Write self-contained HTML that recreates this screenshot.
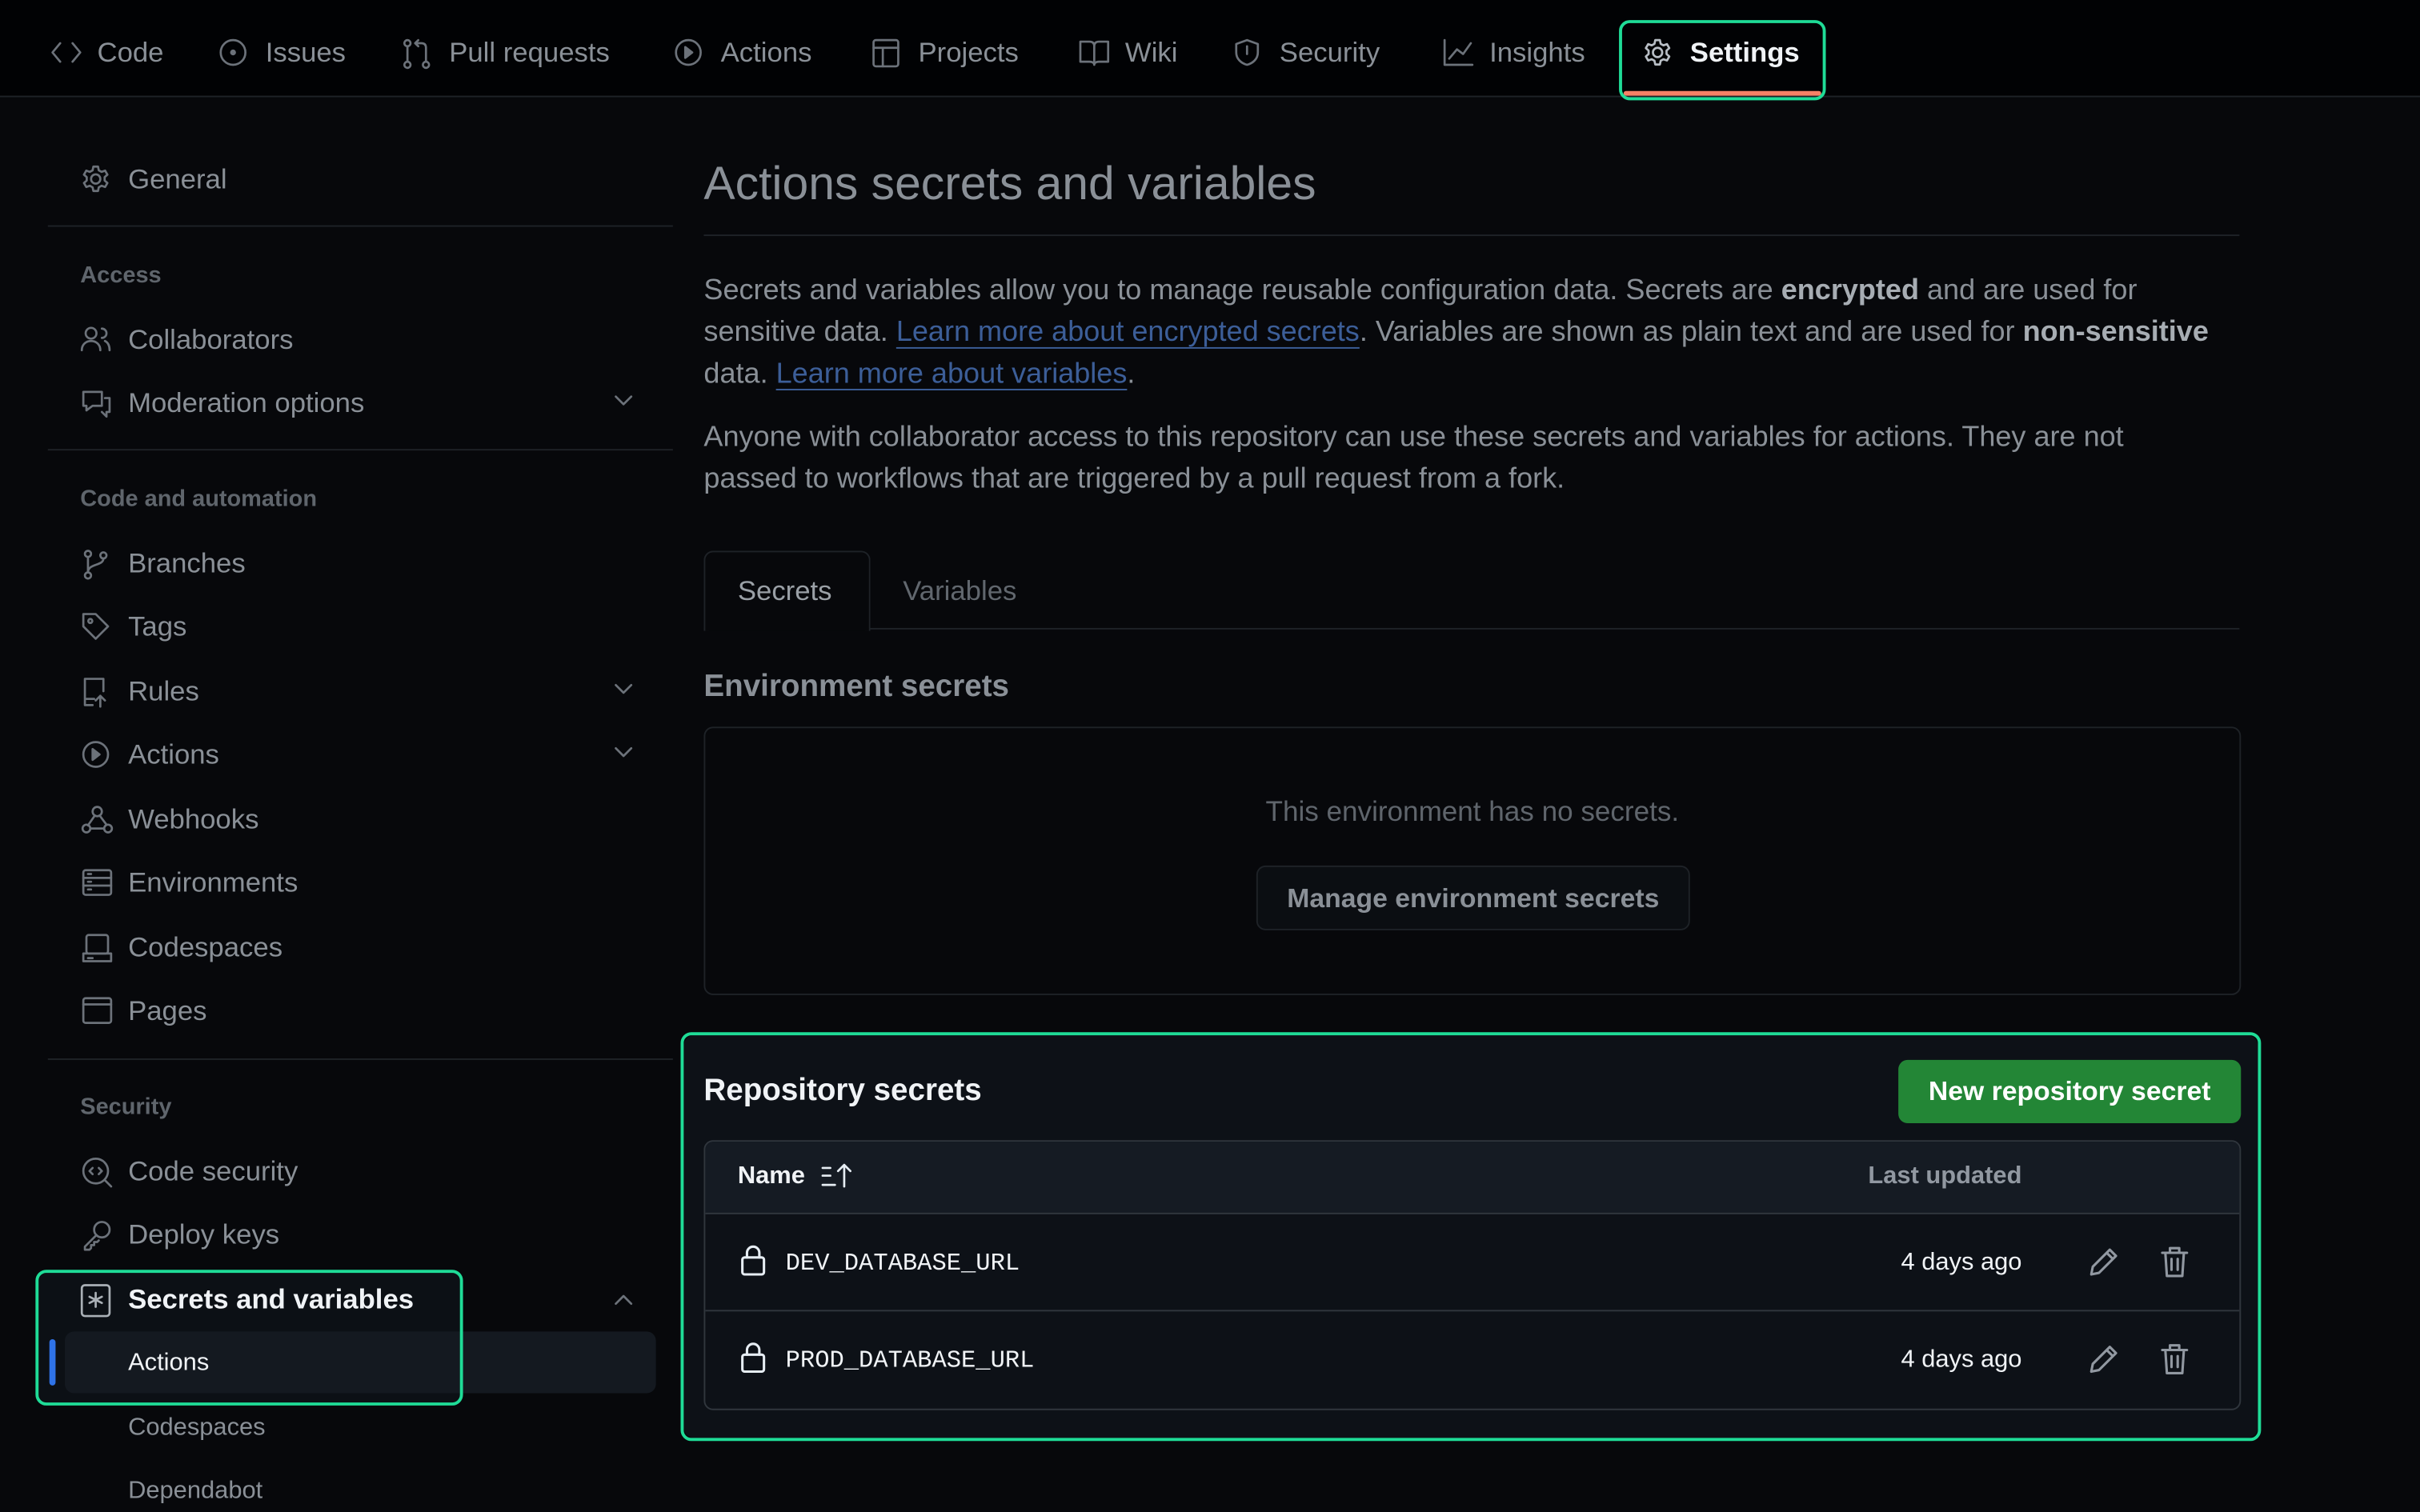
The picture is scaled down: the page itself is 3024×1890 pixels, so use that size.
<!DOCTYPE html>
<html><head><meta charset="utf-8"><style>
*{box-sizing:border-box;margin:0;padding:0}
html,body{width:3024px;height:1890px;overflow:hidden;background:#07080b}
#w{position:absolute;left:0;top:0;width:1568px;height:980px;transform:scale(1.928571);transform-origin:0 0;font-family:"Liberation Sans",sans-serif;color:#8a9097;background:#07080b}
.a{position:absolute;white-space:nowrap}
.nav{position:absolute;left:0;top:0;width:1568px;height:63px;background:#010204;border-bottom:1px solid #1e2227}
.ni{position:absolute;top:22px;font-size:18px;line-height:24px;color:#8a9097}
.ni svg{position:absolute;left:-31px;top:2px}
svg{fill:none;stroke:#6c727a;stroke-width:1.4;stroke-linecap:round;stroke-linejoin:round}
.si{position:absolute;left:83px;font-size:18px;line-height:24px;color:#8a9097}
.si svg{position:absolute;left:-31px;top:2px}
.sh{position:absolute;left:52px;font-size:15px;font-weight:bold;color:#5f656c}
.sep{position:absolute;left:31px;width:405px;height:1px;background:#1e2227}
.hl{position:absolute;border:2.5px solid #1fdc97;border-radius:7px}
.chev{position:absolute;left:397px}
p{position:absolute;left:456px;font-size:18.7px;line-height:27px;color:#8a9097;white-space:nowrap}
a{color:#3c5e98;text-decoration:underline;text-underline-offset:4px}
b{color:#a7adb3}
</style></head><body><div id="w">
<div class="nav">
<div class="ni" style="left:63px"><svg width="22" height="20" viewBox="0 0 22 20"><path d="M7 4L2 10l5 6M15 4l5 6-5 6"/></svg>Code</div>
<div class="ni" style="left:172px"><svg width="20" height="20" viewBox="0 0 20 20"><circle cx="10" cy="10" r="8"/><circle cx="10" cy="10" r="1.2" fill="#6c727a"/></svg>Issues</div>
<div class="ni" style="left:291px"><svg width="20" height="22" viewBox="0 0 20 22"><circle cx="4" cy="4" r="2"/><circle cx="4" cy="18" r="2"/><circle cx="16" cy="18" r="2"/><path d="M4 6v10M16 16V7c0-2-1-3-3-3H9M11 2L9 4l2 2"/></svg>Pull requests</div>
<div class="ni" style="left:467px"><svg width="20" height="20" viewBox="0 0 20 20"><circle cx="10" cy="10" r="8"/><path d="M8 6.5l4.5 3.5L8 13.5z" fill="#6c727a"/></svg>Actions</div>
<div class="ni" style="left:595px"><svg width="20" height="20" viewBox="0 0 20 20"><rect x="2" y="2" width="16" height="17" rx="1.5"/><path d="M2 7h16M8 7v12"/></svg>Projects</div>
<div class="ni" style="left:729px"><svg width="22" height="20" viewBox="0 0 22 20"><path d="M2 3h6c2 0 3 1 3 3v12c0-1-1-2-3-2H2zM20 3h-6c-2 0-3 1-3 3v12c0-1 1-2 3-2h6z"/></svg>Wiki</div>
<div class="ni" style="left:829px"><svg width="20" height="20" viewBox="0 0 20 20"><path d="M10 2l7 2.5V10c0 4-3 7-7 8-4-1-7-4-7-8V4.5z"/><path d="M10 6v5"/></svg>Security</div>
<div class="ni" style="left:965px"><svg width="22" height="20" viewBox="0 0 22 20"><path d="M2 2v16h18M5 14l5-6 4 3 5-7"/></svg>Insights</div>
<div class="ni" style="left:1095px;color:#f0f3f6;font-weight:bold"><svg width="20" height="20" viewBox="0 0 20 20" style="stroke:#b8bec5"><circle cx="10" cy="10" r="3"/><path d="M8.5 2h3l.5 2.4 1.8 1 2.3-.8 1.5 2.6-1.8 1.6v2.2l1.8 1.6-1.5 2.6-2.3-.8-1.8 1-.5 2.4h-3l-.5-2.4-1.8-1-2.3.8-1.5-2.6 1.8-1.6V8.8L2.4 7.2l1.5-2.6 2.3.8 1.8-1z"/></svg>Settings</div>
<div class="a" style="left:1052px;top:59px;width:128px;height:3px;background:#f78166;border-radius:2px"></div>
</div>
<div class="hl" style="left:1049px;top:13px;width:134px;height:52px"></div>

<div class="si" style="top:104px"><svg width="20" height="20" viewBox="0 0 20 20"><circle cx="10" cy="10" r="3"/><path d="M8.5 2h3l.5 2.4 1.8 1 2.3-.8 1.5 2.6-1.8 1.6v2.2l1.8 1.6-1.5 2.6-2.3-.8-1.8 1-.5 2.4h-3l-.5-2.4-1.8-1-2.3.8-1.5-2.6 1.8-1.6V8.8L2.4 7.2l1.5-2.6 2.3.8 1.8-1z"/></svg>General</div>
<div class="sep" style="top:146px"></div>
<div class="sh" style="top:170px">Access</div>
<div class="si" style="top:208px"><svg width="22" height="20" viewBox="0 0 22 20"><circle cx="7" cy="6" r="3.5"/><path d="M1 17c0-4 3-6 6-6s6 2 6 6M14 3a3 3 0 010 6M16 11c2 1 3 3 3 6"/></svg>Collaborators</div>
<div class="si" style="top:249px"><svg width="22" height="22" viewBox="0 0 22 22"><path d="M2 3h12v9H8l-4 3v-3H2zM16 7h3v9h-2v3l-3-3"/></svg>Moderation options</div>
<svg class="chev" style="top:255px" width="14" height="10" viewBox="0 0 14 10"><path d="M2 2l5 5 5-5"/></svg>
<div class="sep" style="top:291px"></div>
<div class="sh" style="top:315px">Code and automation</div>
<div class="si" style="top:353px"><svg width="20" height="22" viewBox="0 0 20 22"><circle cx="5" cy="4" r="2"/><circle cx="5" cy="18" r="2"/><circle cx="15" cy="5" r="2"/><path d="M5 6v10M15 7c0 5-10 3-10 9"/></svg>Branches</div>
<div class="si" style="top:394px"><svg width="20" height="20" viewBox="0 0 20 20"><path d="M2 2h8l8 8-8 8-8-8z"/><circle cx="6.5" cy="6.5" r="1.3"/></svg>Tags</div>
<div class="si" style="top:436px"><svg width="20" height="22" viewBox="0 0 20 22"><path d="M8 19H3V2h12v8M3 15h6M13 13v7M10 16l3-3 3 3"/></svg>Rules</div>
<svg class="chev" style="top:442px" width="14" height="10" viewBox="0 0 14 10"><path d="M2 2l5 5 5-5"/></svg>
<div class="si" style="top:477px"><svg width="20" height="20" viewBox="0 0 20 20"><circle cx="10" cy="10" r="8"/><path d="M8 6.5l4.5 3.5L8 13.5z" fill="#6c727a"/></svg>Actions</div>
<svg class="chev" style="top:483px" width="14" height="10" viewBox="0 0 14 10"><path d="M2 2l5 5 5-5"/></svg>
<div class="si" style="top:519px"><svg width="22" height="22" viewBox="0 0 22 22"><circle cx="11" cy="5" r="3"/><circle cx="4" cy="16" r="2.5"/><circle cx="18" cy="16" r="2.5"/><path d="M9.5 7.5L5 14M7 16h8.5M12.5 7.5L17 13.5"/></svg>Webhooks</div>
<div class="si" style="top:560px"><svg width="22" height="20" viewBox="0 0 22 20"><rect x="2" y="2" width="18" height="16" rx="1.5"/><path d="M2 7h18M2 12h18M5 4.5h2M5 9.5h2M5 14.5h2"/></svg>Environments</div>
<div class="si" style="top:602px"><svg width="22" height="22" viewBox="0 0 22 22"><rect x="4" y="2" width="14" height="12" rx="1.5"/><path d="M2 14h18v5H2zM5 17h3"/></svg>Codespaces</div>
<div class="si" style="top:643px"><svg width="22" height="20" viewBox="0 0 22 20"><rect x="2" y="2" width="18" height="16" rx="1.5"/><path d="M2 6h18"/></svg>Pages</div>
<div class="sep" style="top:686px"></div>
<div class="sh" style="top:709px">Security</div>
<div class="si" style="top:747px"><svg width="22" height="22" viewBox="0 0 22 22"><circle cx="10" cy="10" r="8"/><path d="M16 16l4 4M8 8l-2 2 2 2M12 8l2 2-2 2"/></svg>Code security</div>
<div class="si" style="top:788px"><svg width="22" height="22" viewBox="0 0 22 22"><circle cx="14" cy="7" r="5"/><path d="M10.5 10.5L3 18v2h3l1-1v-2h2v-2h2l1-1"/></svg>Deploy keys</div>
<div class="a" style="left:25px;top:825px;width:274px;height:84px;background:#0c1015;border-radius:6px"></div>
<div class="a" style="left:42px;top:863px;width:383px;height:40px;background:#141920;border-radius:6px"></div>
<div class="a" style="left:32px;top:868px;width:4px;height:30px;background:#2f73e8;border-radius:2px"></div>
<div class="si" style="top:830px;color:#f0f3f6;font-weight:bold"><svg width="20" height="22" viewBox="0 0 20 22" style="stroke:#aab0b6"><rect x="1" y="1" width="18" height="20" rx="2"/><path d="M10 6v9M6 8.5l8 4M14 8.5l-8 4"/></svg>Secrets and variables</div>
<svg class="chev" style="top:837px" width="14" height="10" viewBox="0 0 14 10"><path d="M2 8l5-5 5 5"/></svg>
<div class="a" style="left:83px;top:875px;font-size:16px;color:#f0f3f6">Actions</div>
<div class="a" style="left:83px;top:917px;font-size:16px;color:#8a9097">Codespaces</div>
<div class="a" style="left:83px;top:958px;font-size:16px;color:#8a9097">Dependabot</div>
<div class="hl" style="left:23px;top:823px;width:277px;height:88px"></div>

<div class="a" style="left:456px;top:102px;font-size:30.5px;color:#8a9097">Actions secrets and variables</div>
<div class="a" style="left:456px;top:152px;width:995px;height:1px;background:#1e2227"></div>
<p style="top:174px">Secrets and variables allow you to manage reusable configuration data. Secrets are <b>encrypted</b> and are used for<br>sensitive data. <a>Learn more about encrypted secrets</a>. Variables are shown as plain text and are used for <b>non-sensitive</b><br>data. <a>Learn more about variables</a>.</p>
<p style="top:269px">Anyone with collaborator access to this repository can use these secrets and variables for actions. They are not<br>passed to workflows that are triggered by a pull request from a fork.</p>
<div class="a" style="left:456px;top:407px;width:995px;height:1px;background:#1e2227"></div>
<div class="a" style="left:456px;top:357px;width:108px;height:52px;border:1px solid #1e2227;border-bottom:none;border-radius:6px 6px 0 0;background:#07080b"></div>
<div class="a" style="left:478px;top:373px;font-size:18px;color:#9aa0a6">Secrets</div>
<div class="a" style="left:585px;top:373px;font-size:18px;color:#61676e">Variables</div>
<div class="a" style="left:456px;top:434px;font-size:20px;font-weight:bold;color:#8a9097">Environment secrets</div>
<div class="a" style="left:456px;top:471px;width:996px;height:174px;border:1px solid #1e2227;border-radius:6px"></div>
<div class="a" style="left:456px;top:516px;width:996px;text-align:center;font-size:18.2px;color:#5f656c">This environment has no secrets.</div>
<div class="a" style="left:814px;top:561px;width:281px;height:42px;border:1px solid #1e2227;border-radius:6px;background:#0b0e12;text-align:center;line-height:40px;font-size:17.5px;font-weight:bold;color:#8a9097">Manage environment secrets</div>

<div class="a" style="left:443px;top:671px;width:1020px;height:261px;background:#0d1117;border-radius:7px"></div>
<div class="a" style="left:456px;top:696px;font-size:20px;font-weight:bold;color:#f0f3f6">Repository secrets</div>
<div class="a" style="left:1230px;top:687px;width:222px;height:41px;background:#238636;border-radius:6px;text-align:center;line-height:41px;font-size:17.5px;font-weight:bold;color:#fff">New repository secret</div>
<div class="a" style="left:456px;top:739px;width:996px;height:175px;border:1px solid #30363d;border-radius:6px;overflow:hidden">
 <div style="height:47px;background:#151b23;border-bottom:1px solid #30363d"></div>
 <div style="height:63px;border-bottom:1px solid #30363d"></div>
</div>
<div class="a" style="left:478px;top:754px;font-size:16px;font-weight:bold;color:#f0f3f6">Name</div>
<svg class="a" style="left:532px;top:753px;stroke:#e6edf3" width="22" height="18" viewBox="0 0 22 18"><path d="M1 4h5M1 9h5M1 15h8M15 16V2M11 6l4-4 4 4"/></svg>
<div class="a" style="left:1150px;top:754px;width:160px;text-align:right;font-size:16px;font-weight:bold;color:#9198a1">Last updated</div>
<svg class="a" style="left:479px;top:806px;stroke:#e6edf3;stroke-width:1.6" width="18" height="22" viewBox="0 0 18 22"><rect x="2" y="9" width="14" height="11" rx="1.5"/><path d="M5 9V6a4 4 0 018 0v3"/></svg>
<div class="a" style="left:509px;top:810px;font-family:'Liberation Mono',monospace;font-size:15.8px;color:#f0f3f6">DEV_DATABASE_URL</div>
<div class="a" style="left:1150px;top:810px;width:160px;text-align:right;font-size:16px;color:#f0f3f6">4 days ago</div>
<svg class="a" style="left:479px;top:869px;stroke:#e6edf3;stroke-width:1.6" width="18" height="22" viewBox="0 0 18 22"><rect x="2" y="9" width="14" height="11" rx="1.5"/><path d="M5 9V6a4 4 0 018 0v3"/></svg>
<div class="a" style="left:509px;top:873px;font-family:'Liberation Mono',monospace;font-size:15.8px;color:#f0f3f6">PROD_DATABASE_URL</div>
<div class="a" style="left:1150px;top:873px;width:160px;text-align:right;font-size:16px;color:#f0f3f6">4 days ago</div>
<svg class="a" style="left:1352px;top:807px;stroke:#9198a1;stroke-width:1.6" width="22" height="22" viewBox="0 0 22 22"><path d="M15 3l4 4L8 18l-5 1 1-5zM13 5l4 4"/></svg>
<svg class="a" style="left:1399px;top:806px;stroke:#9198a1;stroke-width:1.6" width="20" height="24" viewBox="0 0 20 24"><path d="M2 6h16M7 6V3h6v3M4 6l1 15h10l1-15M8 10v7M12 10v7"/></svg>
<svg class="a" style="left:1352px;top:870px;stroke:#9198a1;stroke-width:1.6" width="22" height="22" viewBox="0 0 22 22"><path d="M15 3l4 4L8 18l-5 1 1-5zM13 5l4 4"/></svg>
<svg class="a" style="left:1399px;top:869px;stroke:#9198a1;stroke-width:1.6" width="20" height="24" viewBox="0 0 20 24"><path d="M2 6h16M7 6V3h6v3M4 6l1 15h10l1-15M8 10v7M12 10v7"/></svg>
<div class="hl" style="left:441px;top:669px;width:1024px;height:265px"></div>
</div></body></html>
